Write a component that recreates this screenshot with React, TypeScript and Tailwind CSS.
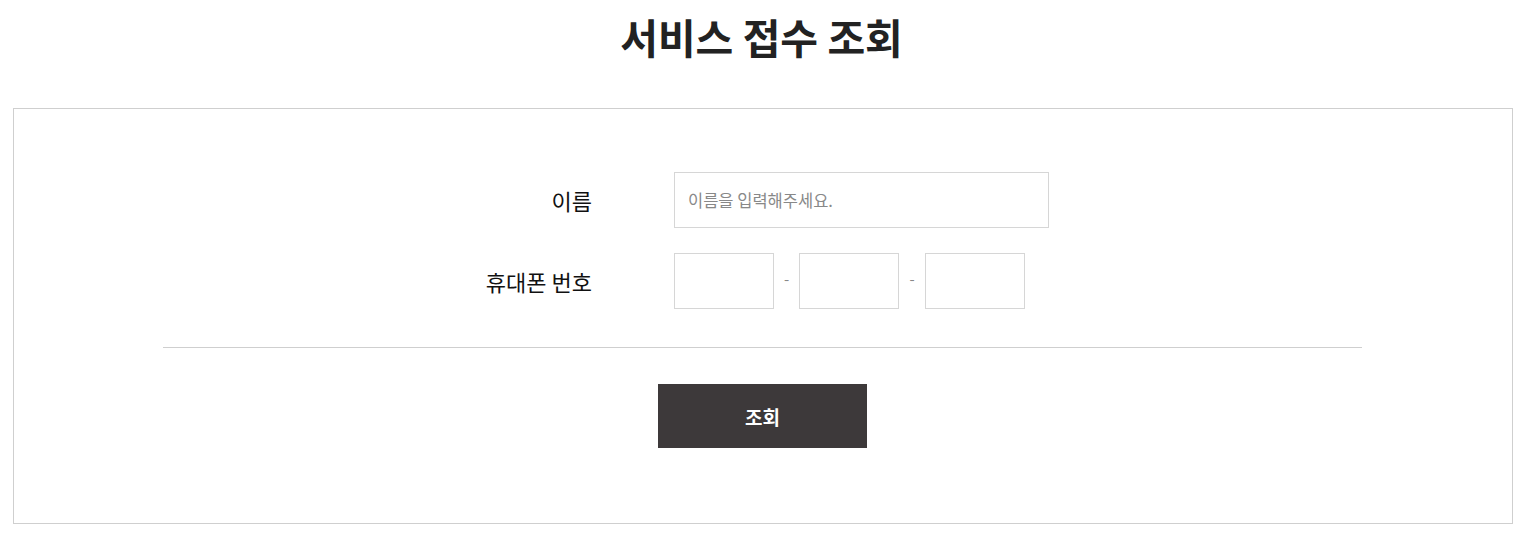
import React from "react";

const font = { fontFamily: '"Noto Sans CJK KR", "Noto Sans", sans-serif' };

export default function App() {
  return (
    <div className="min-h-screen bg-white text-[#111]" style={font}>
      {/* Title */}
      <div className="h-[108px] pt-[15px] text-center">
        <h1 className="text-[41px] font-bold leading-[42px] text-[#222]">서비스 접수 조회</h1>
      </div>

      {/* Form box */}
      <div className="ml-[13px] w-[1500px] border border-[#cfcfcf] pt-[63px] pb-[75px]">
        <div className="ml-[461px] grid w-[574px] grid-cols-[117px_375px] gap-x-[82px] gap-y-[25px]">
          <label className="flex h-[56px] items-center justify-end text-[22px]">이름</label>
          <input
            className="h-[56px] w-[375px] border border-[#d6d6d6] px-[13px] text-[16.5px] outline-none placeholder:text-[#888]"
            placeholder="이름을 입력해주세요."
          />

          <label className="flex h-[56px] items-center justify-end whitespace-nowrap text-[22px]">휴대폰 번호</label>
          <div className="flex items-center">
            <input className="h-[56px] w-[100px] border border-[#d6d6d6] outline-none" />
            <span className="w-[25px] pb-[4px] text-center text-[15px] text-[#888]">-</span>
            <input className="h-[56px] w-[100px] border border-[#d6d6d6] outline-none" />
            <span className="w-[26px] pb-[4px] text-center text-[15px] text-[#888]">-</span>
            <input className="h-[56px] w-[100px] border border-[#d6d6d6] outline-none" />
          </div>
        </div>

        <div className="ml-[149px] mr-[150px] mt-[38px] border-t border-[#cfcfcf]" />

        <div className="mt-[36px] pl-[644px]">
          <button className="h-[64px] w-[209px] bg-[#3d393a] pt-[3px] text-[19px] font-bold text-white">조회</button>
        </div>
      </div>
    </div>
  );
}
